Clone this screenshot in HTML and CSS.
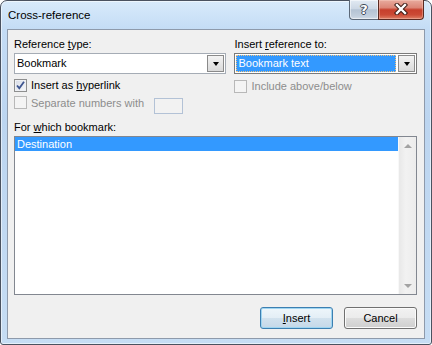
FILE: index.html
```html
<!DOCTYPE html>
<html lang="en">
<head>
    <meta charset="UTF-8">
    <title>Cross-reference</title>
    <link rel="stylesheet" href="styles.css">
</head>
<body>
    <div class="window">
        <div class="titlebar">
            <span class="title">Cross-reference</span>
            <div class="caption-buttons">
                <div class="cap-help"><span>?</span></div>
                <div class="cap-close">
                    <svg width="14" height="12" viewBox="0 0 14 12">
                        <path d="M3 2 L11 10 M11 2 L3 10" stroke="#3b1a14" stroke-width="4.4" stroke-linecap="square"/>
                        <path d="M3 2 L11 10 M11 2 L3 10" stroke="#ffffff" stroke-width="2.4" stroke-linecap="square"/>
                    </svg>
                </div>
            </div>
        </div>

        <div class="client">
            <div class="top-row">
                <div class="col col-left">
                    <div class="label">Reference <u>t</u>ype:</div>
                    <div class="combo">
                        <div class="combo-text">Bookmark</div>
                        <div class="drop"><span class="arrow"></span></div>
                    </div>
                    <div class="check-row">
                        <span class="check checked">
                            <svg width="11" height="11" viewBox="0 0 11 11">
                                <path d="M2 5.5 L4.3 8.2 L9 1.8" fill="none" stroke="#3d5590" stroke-width="1.8"/>
                            </svg>
                        </span>
                        <span>Insert as <u>h</u>yperlink</span>
                    </div>
                    <div class="check-row sep-row disabled">
                        <span class="check"></span>
                        <span>Separate numbers with</span>
                        <span class="small-input"></span>
                    </div>
                </div>
                <div class="col col-right">
                    <div class="label">Insert <u>r</u>eference to:</div>
                    <div class="combo focused">
                        <div class="combo-text"><span class="sel">Bookmark text</span></div>
                        <div class="drop"><span class="arrow"></span></div>
                    </div>
                    <div class="check-row right-check disabled">
                        <span class="check"></span>
                        <span>Include above/below</span>
                    </div>
                </div>
            </div>

            <div class="label list-label">For <u>w</u>hich bookmark:</div>
            <div class="listbox">
                <div class="items">
                    <div class="item selected">Destination</div>
                </div>
                <div class="scrollbar">
                    <div class="sb-btn"><span class="sb-up"></span></div>
                    <div class="sb-track"></div>
                    <div class="sb-btn"><span class="sb-down"></span></div>
                </div>
            </div>

            <div class="actions">
                <button class="btn default"><u>I</u>nsert</button>
                <button class="btn">Cancel</button>
            </div>
        </div>
    </div>
</body>
</html>
```

FILE: styles.css
```css
html, body {
    margin: 0;
    background: #ffffff;
}
body {
    font-family: "Liberation Sans", Arial, sans-serif;
    font-size: 11px;
    color: #000;
}
.window {
    position: relative;
    width: 432px;
    height: 345px;
    box-sizing: border-box;
    border: 1px solid #4a5260;
    border-radius: 7px 7px 3px 3px;
    padding: 0 6px 6px 6px;
    background: linear-gradient(to bottom, #d8eafb 0px, #c4dcf5 28px, #bcd5f0 120px, #c6ddf4 345px);
    box-shadow: inset 0 0 0 1px rgba(255, 255, 255, 0.55);
}
.titlebar {
    height: 28px;
    display: flex;
}
.title {
    margin-left: 1px;
    padding-top: 7px;
    line-height: 15px;
    font-size: 11.5px;
}
.caption-buttons {
    position: absolute;
    top: -1px;
    right: 7px;
    display: flex;
    height: 20px;
}
.cap-help, .cap-close {
    box-sizing: border-box;
    height: 20px;
    display: flex;
    align-items: center;
    justify-content: center;
    border: 1px solid #5b6878;
    border-top: none;
}
.cap-help {
    width: 29px;
    border-radius: 0 0 0 4px;
    border-right: none;
    background: linear-gradient(to bottom, #e2eaf3 0%, #cdd8e5 45%, #b4c3d4 52%, #c2cfdd 85%, #d3dde8 100%);
    box-shadow: inset 0 0 0 1px rgba(255, 255, 255, 0.5);
}
.cap-help span {
    font-family: "DejaVu Sans", sans-serif;
    font-weight: bold;
    font-size: 13px;
    line-height: 13px;
    color: #fff;
    margin-top: -1px;
    text-shadow: 1px 0 0 #404a58, -1px 0 0 #404a58, 0 1px 0 #404a58, 0 -1px 0 #404a58;
}
.cap-close {
    width: 46px;
    border-color: #5a2a22;
    border-radius: 0 0 4px 0;
    background: linear-gradient(to bottom, #e8ab9e 0%, #dc8677 40%, #c63f2c 52%, #cb4a35 78%, #de8066 100%);
    box-shadow: inset 0 0 0 1px rgba(255, 220, 210, 0.35);
}
.cap-close svg {
    margin-top: -1px;
}
.client {
    height: 310px;
    box-sizing: border-box;
    border: 1px solid #8e9aab;
    background: #f0f0f0;
    padding: 7px 7px 0 6px;
}
.top-row {
    display: flex;
    gap: 8px;
}
.col-left {
    width: 213px;
}
.col-right {
    width: 183px;
}
.label {
    line-height: 15px;
    height: 15px;
    margin-bottom: 1px;
}
.combo {
    display: flex;
    height: 21px;
    box-sizing: border-box;
    border: 1px solid #a5acb5;
    background: #fff;
}
.combo.focused {
    border-color: #7a7a7a;
}
.combo-text {
    flex: 1;
    padding: 0 2px;
    line-height: 19px;
}
.focused .combo-text {
    padding: 1px 1px;
}
.sel {
    display: block;
    height: 17px;
    line-height: 15px;
    padding-left: 1px;
    box-sizing: border-box;
    background: #3399ff;
    color: #fff;
    border: 1px dotted #f5c37a;
}
.drop {
    width: 17px;
    margin: 1px;
    box-sizing: border-box;
    border: 1px solid #8a8a8a;
    background: linear-gradient(to bottom, #f3f3f3, #dadada);
    display: flex;
    align-items: center;
    justify-content: center;
}
.arrow {
    width: 0;
    height: 0;
    border-left: 3.5px solid transparent;
    border-right: 3.5px solid transparent;
    border-top: 4px solid #000;
}
.check-row {
    display: flex;
    align-items: center;
    height: 14px;
    margin-top: 4px;
    gap: 4px;
}
.right-check {
    margin-top: 5px;
}
.sep-row {
    align-items: flex-start;
    height: 17px;
    line-height: 14px;
}
.check {
    width: 13px;
    height: 13px;
    box-sizing: border-box;
    border: 1px solid #b8b8b8;
    background: #f4f4f4;
    display: flex;
    align-items: center;
    justify-content: center;
}
.check.checked {
    border-color: #8e8f8f;
    background: linear-gradient(135deg, #d6dbe6, #f8f9fb);
    box-shadow: inset 0 0 0 1px #eef0f4;
}
.disabled {
    color: #8d8d8d;
}
.small-input {
    width: 29px;
    height: 16px;
    margin-top: 2px;
    margin-left: 6px;
    box-sizing: border-box;
    border: 1px solid #b3c2d6;
    background: #f2f2f2;
}
.list-label {
    margin-top: 7px;
}
.listbox {
    display: flex;
    height: 159px;
    box-sizing: border-box;
    border: 1px solid #828790;
    background: #fff;
}
.items {
    flex: 1;
}
.item {
    height: 14px;
    line-height: 14px;
    padding-left: 2px;
}
.item.selected {
    background: #3399ff;
    color: #fff;
}
.scrollbar {
    width: 17px;
    display: flex;
    flex-direction: column;
    background: linear-gradient(to right, #e8e8e8, #f2f2f2 40%, #ececec);
    border-left: 1px solid #f8f8f8;
}
.sb-btn {
    height: 17px;
    display: flex;
    align-items: center;
    justify-content: center;
}
.sb-track {
    flex: 1;
}
.sb-up, .sb-down {
    width: 0;
    height: 0;
    border-left: 4px solid transparent;
    border-right: 4px solid transparent;
}
.sb-up {
    border-bottom: 4px solid #a3a3a3;
}
.sb-down {
    border-top: 4px solid #a3a3a3;
}
.actions {
    display: flex;
    justify-content: flex-end;
    gap: 11px;
    margin-top: 12px;
}
.btn {
    width: 73px;
    height: 22px;
    font-family: inherit;
    font-size: 11px;
    padding: 0;
    border: 1px solid #707070;
    border-radius: 3px;
    background: linear-gradient(to bottom, #f2f2f2 0%, #ebebeb 50%, #dddddd 50%, #cfcfcf 100%);
    box-shadow: inset 0 0 0 1px #fbfbfb;
    color: #000;
}
.btn.default {
    border-color: #3c7fb1;
    background: linear-gradient(to bottom, #eef6fb 0%, #e3eef6 50%, #d2e2ee 50%, #c5d8e8 100%);
    box-shadow: inset 0 0 0 1px #9fd5f1;
}
```
